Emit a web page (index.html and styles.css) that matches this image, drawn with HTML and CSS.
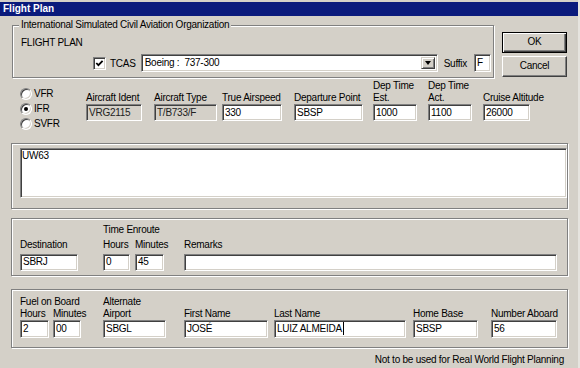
FILE: index.html
```html
<!DOCTYPE html>
<html lang="en">
<head>
<meta charset="UTF-8" />
<title>Flight Plan</title>
<link rel="stylesheet" href="styles.css">
</head>
<body>

<div class="window">
  <div class="titlebar">Flight Plan</div>

  <div class="content">
    <!-- Верх: организация + кнопки -->
    <div class="top">
      <div class="group org">
        <div class="legend">International Simulated Civil Aviation Organization</div>
        <div class="plan-title">FLIGHT PLAN</div>
        <div class="aircraft-row">
          <span class="check"><svg width="9" height="9" viewBox="0 0 9 9"><path d="M1.3 4 L3.4 6.2 L7.6 1.8" fill="none" stroke="#000" stroke-width="1.8"/></svg></span>
          <span class="check-label">TCAS</span>
          <div class="combo">
            <span class="combo-text">Boeing :&nbsp; 737-300</span>
            <span class="drop-btn"></span>
          </div>
          <span class="suffix-label">Suffix</span>
          <div class="box suffix">F</div>
        </div>
      </div>
      <div class="actions">
        <button class="btn default">OK</button>
        <button class="btn">Cancel</button>
      </div>
    </div>

    <!-- Правила полета и данные ВС -->
    <div class="flight-row">
      <div class="rules">
        <div class="rule"><span class="radio"></span>VFR</div>
        <div class="rule"><span class="radio on"></span>IFR</div>
        <div class="rule"><span class="radio"></span>SVFR</div>
      </div>
      <div class="field f-ident"><div class="lbl">Aircraft Ident</div><div class="box ro">VRG2115</div></div>
      <div class="field f-type"><div class="lbl">Aircraft Type</div><div class="box ro">T/B733/F</div></div>
      <div class="field f-speed"><div class="lbl">True Airspeed</div><div class="box">330</div></div>
      <div class="field f-dep"><div class="lbl">Departure Point</div><div class="box">SBSP</div></div>
      <div class="field f-est"><div class="lbl">Dep Time<br>Est.</div><div class="box">1000</div></div>
      <div class="field f-act"><div class="lbl">Dep Time<br>Act.</div><div class="box">1100</div></div>
      <div class="field f-alt"><div class="lbl">Cruise Altitude</div><div class="box">26000</div></div>
    </div>

    <!-- Маршрут -->
    <div class="group route">
      <div class="box route-text">UW63</div>
    </div>

    <!-- Назначение -->
    <div class="group dest-group">
      <div class="field f-dest"><div class="lbl">Destination</div><div class="box">SBRJ</div></div>
      <div class="pair f-time">
        <div class="lbl pair-title">Time Enroute</div>
        <div class="pair-row">
          <div class="field f-th"><div class="lbl">Hours</div><div class="box">0</div></div>
          <div class="field f-tm"><div class="lbl">Minutes</div><div class="box">45</div></div>
        </div>
      </div>
      <div class="field f-rem"><div class="lbl">Remarks</div><div class="box"></div></div>
    </div>

    <!-- Топливо и экипаж -->
    <div class="group fuel-group">
      <div class="pair f-fuel">
        <div class="lbl">Fuel on Board</div>
        <div class="pair-row">
          <div class="field f-fh"><div class="lbl">Hours</div><div class="box">2</div></div>
          <div class="field f-fm"><div class="lbl">Minutes</div><div class="box">00</div></div>
        </div>
      </div>
      <div class="field f-altn"><div class="lbl">Alternate<br>Airport</div><div class="box">SBGL</div></div>
      <div class="field f-first"><div class="lbl">First Name</div><div class="box">JOSÉ</div></div>
      <div class="field f-last"><div class="lbl">Last Name</div><div class="box">LUIZ ALMEIDA<span class="caret"></span></div></div>
      <div class="field f-home"><div class="lbl">Home Base</div><div class="box">SBSP</div></div>
      <div class="field f-num"><div class="lbl">Number Aboard</div><div class="box">56</div></div>
    </div>

    <div class="disclaimer">Not to be used for Real World Flight Planning</div>
  </div>
</div>

</body>
</html>
```

FILE: styles.css
```css
/* Общие стили */
body {
  margin: 0;
  background: #e6e4df;
  font-family: "Liberation Sans", Arial, sans-serif;
  font-size: 10px;
  letter-spacing: -0.25px;
  color: #000;
}

.window {
  width: 578px;
  height: 368px;
  background: #d4d0c8;
  overflow: hidden;
}

.titlebar {
  margin-top: 2px;
  height: 14px;
  line-height: 14px;
  padding-left: 3px;
  background: #0a1a7c;
  color: #fff;
  font-weight: bold;
  letter-spacing: 0;
}

.content {
  padding: 0 10px 0 11px;
}

/* Рамка группы (etched) */
.group {
  box-sizing: border-box;
  border: 1px solid #808080;
  box-shadow: inset 1px 1px 0 #fff, 1px 1px 0 #fff;
}

.legend {
  display: table;
  margin: -7px 0 0 6px;
  padding: 0 2px;
  line-height: 12px;
  background: #d4d0c8;
}

.lbl {
  line-height: 12px;
  white-space: nowrap;
}

/* Поле ввода (sunken) */
.box {
  box-sizing: border-box;
  height: 17px;
  line-height: 15px;
  padding: 0 2px;
  border: 1px solid;
  border-color: #808080 #fff #fff #808080;
  box-shadow: inset 1px 1px 0 #404040, inset -1px -1px 0 #d4d0c8;
  background: #fff;
  white-space: nowrap;
  overflow: hidden;
}
.box.ro {
  background: #d4d0c8;
  color: #222;
}

.caret {
  display: inline-block;
  width: 1px;
  height: 13px;
  margin-left: 1px;
  vertical-align: -3px;
  background: #000;
}

/* Верхний блок */
.top {
  display: flex;
}
.org {
  width: 482px;
  height: 53px;
  margin: 9px 0 0 1px;
}
.plan-title {
  margin: 6px 0 0 8px;
  line-height: 12px;
}
.aircraft-row {
  display: flex;
  align-items: center;
  height: 18px;
  margin: 5px 0 0 80px;
}

.check {
  box-sizing: border-box;
  width: 13px;
  height: 13px;
  border: 1px solid;
  border-color: #808080 #fff #fff #808080;
  box-shadow: inset 1px 1px 0 #404040, inset -1px -1px 0 #d4d0c8;
  background: #fff;
  display: flex;
  align-items: center;
  justify-content: center;
}
.check-label {
  margin-left: 4px;
}

.combo {
  box-sizing: border-box;
  display: flex;
  width: 297px;
  height: 18px;
  margin-left: 5px;
  padding: 2px;
  border: 1px solid;
  border-color: #808080 #fff #fff #808080;
  box-shadow: inset 1px 1px 0 #404040, inset -1px -1px 0 #d4d0c8;
  background: #fff;
}
.combo-text {
  flex: 1;
  line-height: 12px;
  padding-left: 1px;
  white-space: pre;
}
.drop-btn {
  box-sizing: border-box;
  width: 14px;
  display: flex;
  align-items: center;
  justify-content: center;
  background: #d4d0c8;
  border: 1px solid;
  border-color: #d4d0c8 #404040 #404040 #d4d0c8;
  box-shadow: inset 1px 1px 0 #fff, inset -1px -1px 0 #808080;
}
.drop-btn::after {
  content: "";
  border-style: solid;
  border-width: 4px 3.5px 0;
  border-color: #000 transparent transparent;
}

.suffix-label {
  margin-left: 6px;
}
.suffix {
  width: 17px;
  height: 18px;
  line-height: 16px;
  margin-left: 7px;
}

/* Кнопки */
.actions {
  display: flex;
  flex-direction: column;
  gap: 3px;
  margin: 16px 0 0 8px;
}
.btn {
  box-sizing: border-box;
  width: 65px;
  height: 21px;
  padding: 0 0 2px;
  font: inherit;
  letter-spacing: inherit;
  color: #000;
  background: #d4d0c8;
  border: 1px solid;
  border-color: #fff #404040 #404040 #fff;
  box-shadow: inset -1px -1px 0 #808080;
}
.btn.default {
  border-color: #000;
  box-shadow: inset 1px 1px 0 #fff, inset -1px -1px 0 #404040, inset -2px -2px 0 #808080;
}

/* Ряд правил полета */
.flight-row {
  display: flex;
  align-items: flex-start;
  height: 63px;
  margin-top: 2px;
}
.rules {
  width: 66px;
  margin: 6px 0 0 9px;
}
.rule {
  display: flex;
  align-items: center;
  height: 15px;
}
.radio {
  box-sizing: border-box;
  width: 12px;
  height: 12px;
  margin-right: 2px;
  border-radius: 50%;
  border: 1px solid;
  border-color: #808080 #fff #fff #808080;
  box-shadow: inset 1px 1px 0 #404040, inset -1px -1px 0 #d4d0c8;
  background: #fff;
  display: flex;
  align-items: center;
  justify-content: center;
}
.radio.on::after {
  content: "";
  width: 4px;
  height: 4px;
  border-radius: 50%;
  background: #000;
}

.field {
  display: flex;
  flex-direction: column;
  justify-content: flex-end;
}
.flight-row .field {
  height: 41px;
}

.f-ident { width: 56px; }
.f-type { width: 63px; margin-left: 12px; }
.f-speed { width: 60px; margin-left: 5px; }
.f-dep { width: 69px; margin-left: 12px; }
.f-est { width: 44px; margin-left: 10px; }
.f-act { width: 44px; margin-left: 11px; }
.f-alt { width: 47px; margin-left: 11px; }

/* Маршрут */
.route {
  height: 66px;
  padding: 4px 0 0 8px;
}
.route-text {
  height: 50px;
  line-height: 12px;
  padding: 1px 1px;
}

/* Назначение */
.dest-group {
  display: flex;
  align-items: flex-end;
  height: 58px;
  margin-top: 9px;
  padding: 5px 0 4px 8px;
}
.dest-group .field .lbl,
.dest-group .pair-title {
  margin-bottom: 3px;
}
.dest-group .box {
  line-height: 13px;
}
.pair-row {
  display: flex;
}
.f-dest { width: 58px; }
.f-time { margin-left: 25px; }
.f-th { width: 27px; }
.f-tm { width: 29px; margin-left: 5px; }
.f-rem { width: 373px; margin-left: 20px; }

/* Топливо и экипаж */
.fuel-group {
  display: flex;
  align-items: flex-end;
  height: 59px;
  margin-top: 13px;
  padding: 5px 0 9px 8px;
}
.fuel-group .box {
  height: 18px;
  line-height: 16px;
}
.f-fh { width: 29px; }
.f-fm { width: 28px; margin-left: 4px; }
.f-altn { width: 63px; margin-left: 22px; }
.f-first { width: 84px; margin-left: 18px; }
.f-last { width: 132px; margin-left: 6px; }
.f-home { width: 65px; margin-left: 7px; }
.f-num { width: 66px; margin-left: 13px; }

.disclaimer {
  margin-top: 6px;
  padding-right: 4px;
  line-height: 12px;
  text-align: right;
}
```
